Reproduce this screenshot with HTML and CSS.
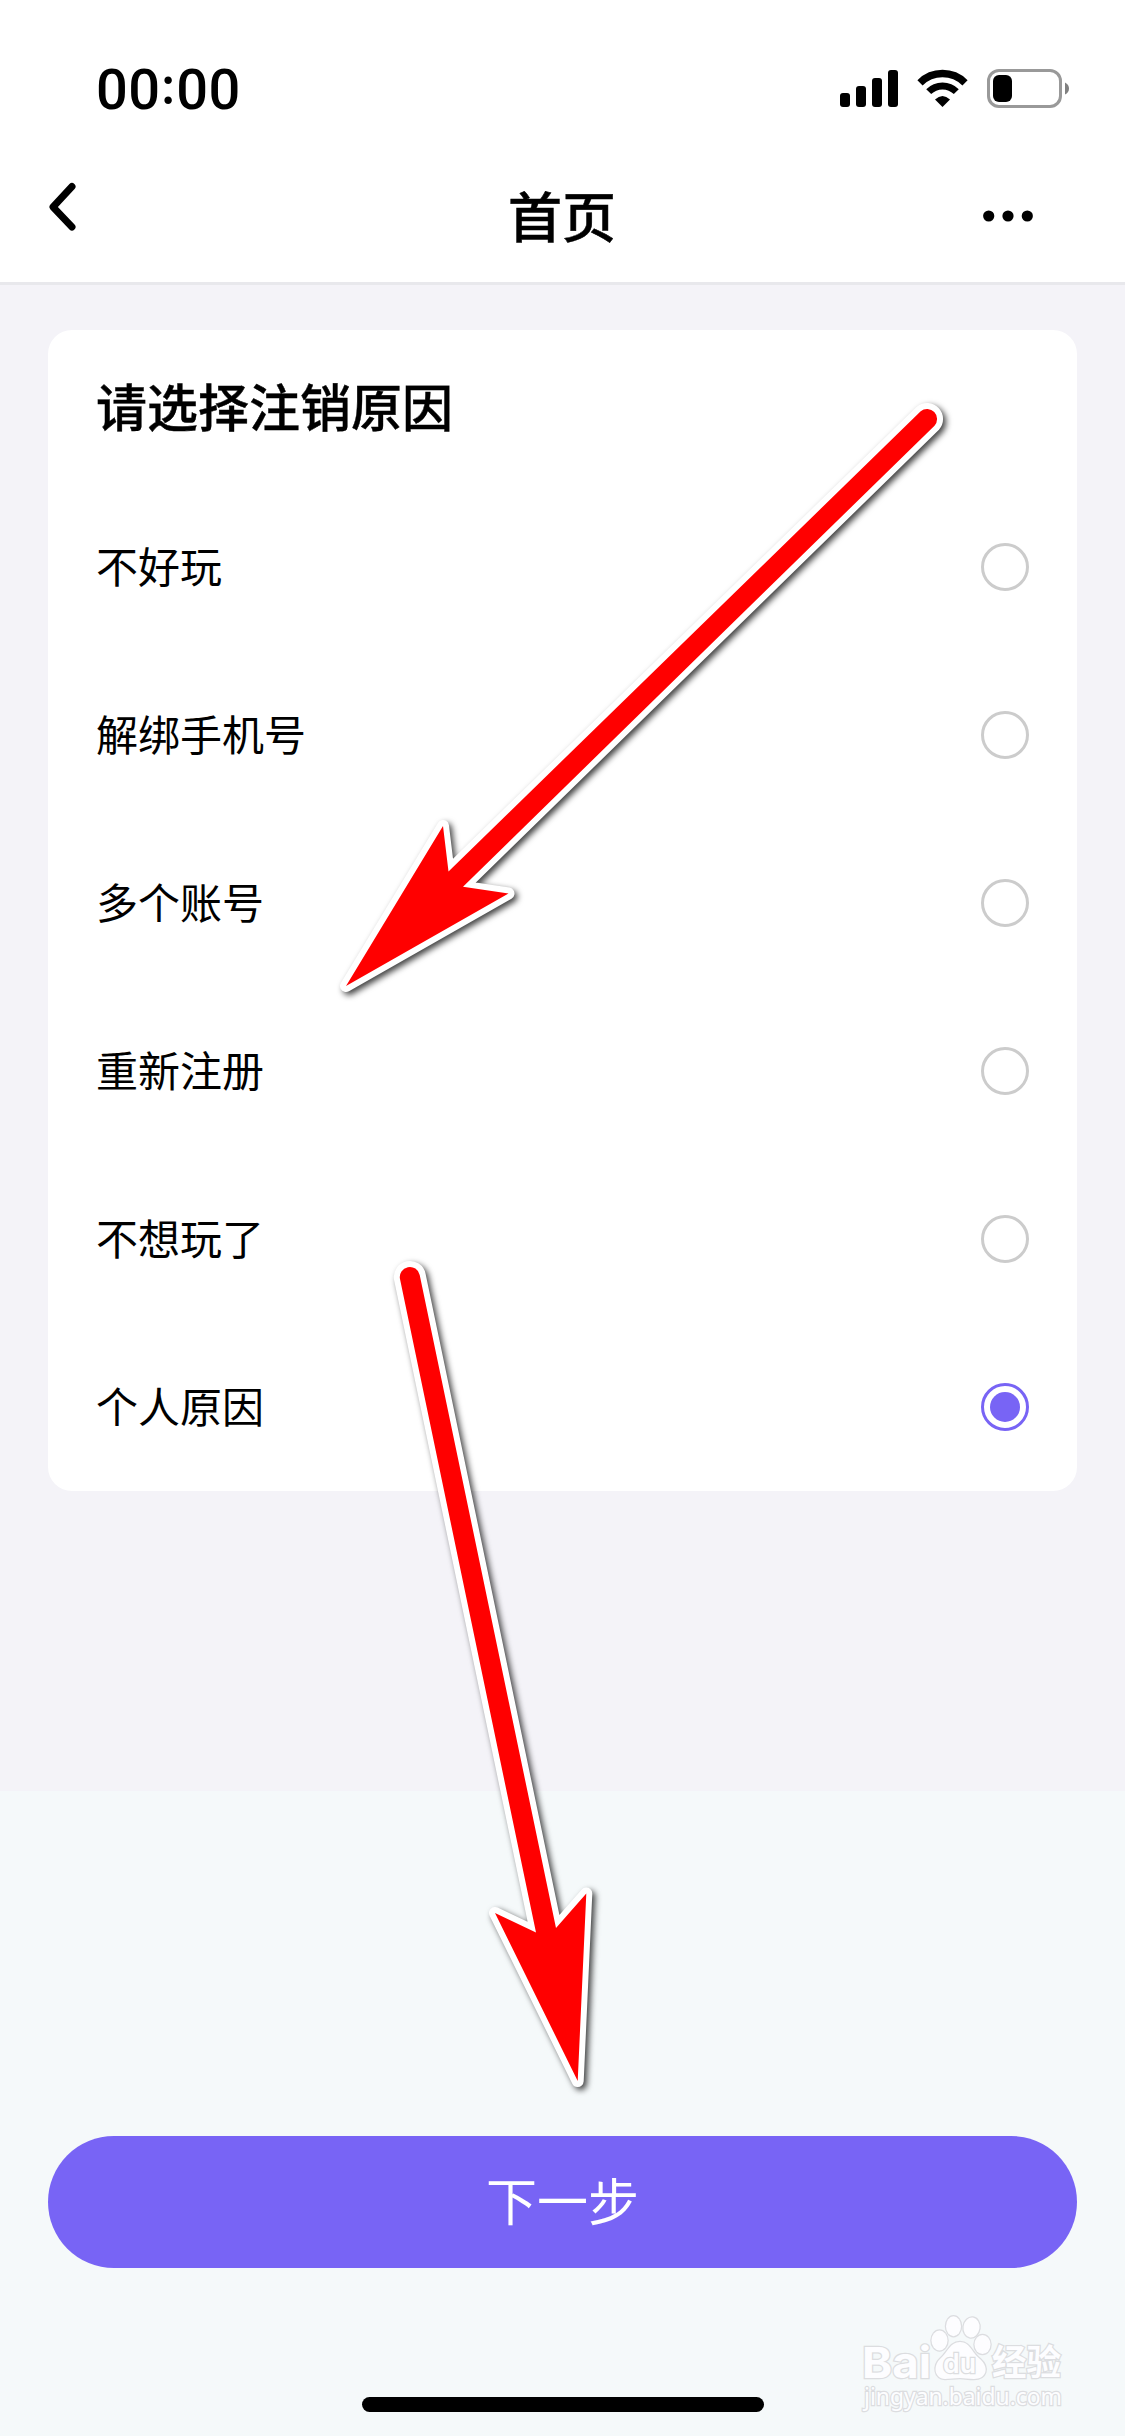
FILE: index.html
```html
<!DOCTYPE html>
<html lang="zh-CN">
<head>
<meta charset="utf-8">
<title>首页</title>
<link rel="stylesheet" href="styles.css">
</head>
<body>
<div class="screen">
  <header class="top">
    <div class="status">
      <span class="time">00<span class="colon">:</span>00</span>
      <svg class="indicators" width="230" height="40" viewBox="0 0 230 40">
        <rect x="0" y="24" width="10" height="14" rx="3"/>
        <rect x="16" y="17" width="10" height="21" rx="3"/>
        <rect x="32" y="9" width="10" height="29" rx="3"/>
        <rect x="48" y="1" width="10" height="37" rx="3"/>
        <g fill="none" stroke="#000">
          <path d="M80 13.8A32 32 0 0 1 125 13.8" stroke-width="7.4"/>
          <path d="M88.7 22.6A19.5 19.5 0 0 1 116.3 22.6" stroke-width="7"/>
        </g>
        <path d="M95 30.6Q102.500 23.400 110 30.600L102.500 38Z"/>
        <rect x="148.500" y="1.500" width="72" height="36" rx="10.500" fill="none" stroke="#999" stroke-width="3"/>
        <rect x="153" y="6" width="19" height="27" rx="6"/>
        <path d="M225 13.500Q229 15.500 229 19.500T225 25.500Z" fill="#808080"/>
      </svg>
    </div>
    <nav class="nav">
      <svg class="back" width="30" height="52" viewBox="0 0 30 52"><path d="M25 5.500L6 26L25 46"/></svg>
      <h1 class="title">首页</h1>
      <svg class="more" width="50" height="12" viewBox="0 0 50 12"><circle cx="5.700" cy="6" r="5.600"/><circle cx="25" cy="6" r="5.600"/><circle cx="44.300" cy="6" r="5.600"/></svg>
    </nav>
  </header>
  <main class="content">
    <section class="card">
      <h2 class="heading">请选择注销原因</h2>
      <ul class="options">
        <li class="option"><span class="label">不好玩</span><span class="radio"></span></li>
        <li class="option"><span class="label">解绑手机号</span><span class="radio"></span></li>
        <li class="option"><span class="label">多个账号</span><span class="radio"></span></li>
        <li class="option"><span class="label">重新注册</span><span class="radio"></span></li>
        <li class="option"><span class="label">不想玩了</span><span class="radio"></span></li>
        <li class="option"><span class="label">个人原因</span><span class="radio checked"></span></li>
      </ul>
    </section>
  </main>
  <footer class="bottom">
    <button class="next">下一步</button>
    <div class="home"></div>
  </footer>
  <svg class="overlay" width="1125" height="2436" viewBox="0 0 1125 2436">
    <g class="arrow">
      <path d="M920.700 411.300A10 10 0 0 1 934.500 425.700L463 886.700L508.500 893.500L346 986L443 826L448.500 871.500Z"/>
      <path d="M400 1279A10 10 0 0 1 419.700 1275L556 1928L586.300 1893.500L577.700 2081L495 1913L536 1932.500Z"/>
    </g>
    <g class="mark">
      <text x="862" y="2378" font-size="43" font-weight="700" textLength="69" lengthAdjust="spacingAndGlyphs">Bai</text>
      <ellipse cx="939.500" cy="2340.500" rx="8" ry="10"/>
      <ellipse cx="953.500" cy="2326.300" rx="7.500" ry="10"/>
      <ellipse cx="971.500" cy="2327.500" rx="8" ry="10" transform="rotate(8 971.500 2327.500)"/>
      <ellipse cx="982.500" cy="2344.500" rx="8" ry="9.500"/>
      <path d="M960 2342C970 2342 972 2353 980 2359C990 2368 986 2379 974 2379C968 2379 964 2378 960 2378C954 2378 950 2379 945 2379C934 2378 933 2366 940 2359C948 2352 950 2342 960 2342Z"/>
      <text class="du" x="943" y="2373" font-size="27" font-weight="600" textLength="33" lengthAdjust="spacingAndGlyphs">du</text>
      <text class="cjk" x="992" y="2375" font-size="35" font-weight="700" textLength="69" lengthAdjust="spacingAndGlyphs">经验</text>
      <text class="url" x="864" y="2405" font-size="24" textLength="198" lengthAdjust="spacingAndGlyphs">jingyan.baidu.com</text>
    </g>
  </svg>
</div>
</body>
</html>
```
FILE: styles.css
```css
* { box-sizing: border-box; }
body { margin: 0; font-family: "Noto Sans CJK SC", sans-serif; color: #000; }
.screen { position: relative; width: 1125px; height: 2436px; display: flex; flex-direction: column; background: #f4f3f8; overflow: hidden; }
.top { height: 285px; background: #fff; border-bottom: 3px solid #e8e8ec; }
.status { height: 150px; padding: 69px 55px 0 96px; display: flex; justify-content: space-between; align-items: flex-start; }
.time { margin-top: -3px; font-family: Roboto, sans-serif; font-size: 56px; font-weight: 500; line-height: 48px; letter-spacing: 0.3px; }
.colon { display: inline-block; width: 16px; text-align: center; font-family: Inter, sans-serif; font-size: 52px; line-height: 40px; transform: translateY(-5px); }
.nav { height: 132px; padding: 0 86px 0 47px; display: grid; grid-template-columns: 100px 1fr 56px; align-items: start; }
.back { margin-top: 31px; fill: none; stroke: #000; stroke-width: 7; stroke-linecap: round; stroke-linejoin: round; }
.title { margin: 25px 0 0; padding-right: 6px; text-align: center; font-size: 54px; font-weight: 500; line-height: 80px; -webkit-text-stroke: 0.5px #000; }
.more { margin-top: 60px; }
.content { flex: none; height: 1506px; padding: 45px 48px 0; }
.card { height: 1161px; border-radius: 24px; background: #fff; padding: 35px 48px 0; }
.heading { margin: 0; font-size: 51px; font-weight: 500; line-height: 80px; height: 118px; -webkit-text-stroke: 0.4px #000; }
.options { margin: 0; padding: 0; list-style: none; }
.option { height: 168px; display: flex; align-items: center; justify-content: space-between; font-size: 42px; }
.label { padding-bottom: 5px; }
.radio { width: 48px; height: 48px; border: 3px solid #ccc; border-radius: 50%; display: grid; place-items: center; }
.checked { border-color: #7864f5; }
.checked::after { content: ""; width: 30px; height: 30px; border-radius: 50%; background: #7864f5; }
.bottom { flex: 1; background: #f5f9fa; padding: 345px 48px 24px; display: flex; flex-direction: column; align-items: center; justify-content: space-between; }
.next { width: 100%; height: 132px; border: 0; border-radius: 66px; background: #7864f5; color: #fff; font-family: inherit; font-size: 51px; font-weight: 400; padding: 0 0 7px; }
.home { width: 402px; height: 15px; border-radius: 8px; background: #000; }
.overlay { position: absolute; left: 0; top: 0; }
.arrow { fill: #f00; stroke: #fff; stroke-width: 12px; stroke-linejoin: round; paint-order: stroke; filter: drop-shadow(3px 3px 3px rgba(0, 0, 0, .75)); }
.mark { fill: #fdfdff; stroke: #dcdde0; stroke-width: 2.5px; paint-order: stroke; font-family: Inter, "Noto Sans CJK SC", sans-serif; }
.url { font-family: "Noto Sans", sans-serif; }
.cjk { font-family: "Noto Sans CJK SC", sans-serif; }
```
